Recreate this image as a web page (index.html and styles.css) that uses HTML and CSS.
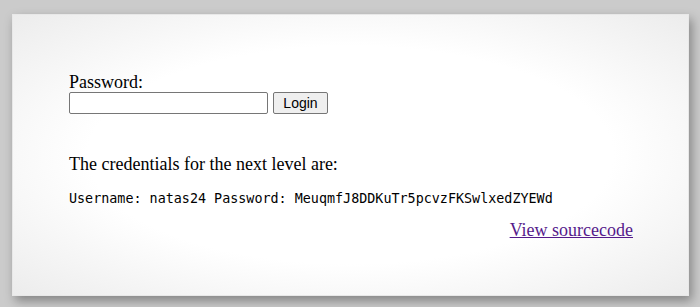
FILE: index.html
```
<!DOCTYPE html>
<html>
<head>
<meta charset="utf-8">
<link rel="stylesheet" href="styles.css">
</head>
<body>
<div class="content">
  <form class="login">
    <label class="label" for="pw">Password:</label>
    <div class="row">
      <input class="pw" id="pw" type="password" name="password">
      <button class="btn" type="button">Login</button>
    </div>
  </form>
  <p class="creds">The credentials for the next level are:</p>
  <pre class="mono">Username: natas24 Password: MeuqmfJ8DDKuTr5pcvzFKSwlxedZYEWd</pre>
  <div class="source"><a class="srclink" href="#">View sourcecode</a></div>
</div>
</body>
</html>
```
FILE: styles.css
```
html, body {
  margin: 0;
  padding: 0;
  background: #cbcbcb;
  width: 700px;
  height: 307px;
  overflow: hidden;
}
body {
  font-family: "Liberation Serif", "Times New Roman", serif;
  font-size: 18px;
  color: #000;
}
.content {
  box-sizing: border-box;
  margin: 14px 0 0 12px;
  width: 677px;
  height: 282px;
  padding: 58px 55px 0 56px;
  background: radial-gradient(ellipse at center, #ffffff 55%, #ececec 100%);
  border: 1px solid #e8e8e8;
  box-shadow: 3px 5px 10px rgba(0,0,0,0.35);
}
.login {
  margin: 0;
  display: flex;
  flex-direction: column;
}
.label {
  line-height: 19px;
  height: 19px;
}
.row {
  display: flex;
  gap: 5px;
}
.pw {
  box-sizing: border-box;
  width: 199px;
  height: 22px;
  margin: 0;
  border: 1px solid #767676;
  border-radius: 2px;
  background: #fff;
}
.btn {
  box-sizing: border-box;
  width: 55px;
  height: 22px;
  margin: 0;
  padding: 0 6px;
  font-family: "Liberation Sans", Arial, sans-serif;
  font-size: 14px;
  color: #000;
  background: #efefef;
  border: 1px solid #767676;
  border-radius: 2px;
}
.creds {
  margin: 41px 0 0;
  line-height: 19px;
}
.mono {
  margin: 17px 0 0;
  font-family: "DejaVu Sans Mono", Consolas, monospace;
  font-size: 13.4px;
  line-height: 16px;
  color: #000;
}
.source {
  margin-top: 14px;
  text-align: right;
  line-height: 19px;
}
.srclink {
  color: #551a8b;
}
```
